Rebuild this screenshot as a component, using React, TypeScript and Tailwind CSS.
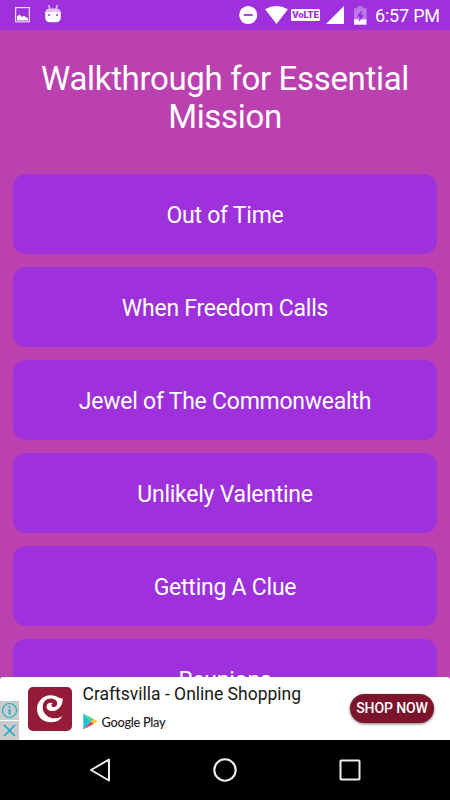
import type { ReactNode } from 'react';

const MISSIONS = [
  'Out of Time',
  'When Freedom Calls',
  'Jewel of The Commonwealth',
  'Unlikely Valentine',
  'Getting A Clue',
  'Reunions',
];

export default function App() {
  return (
    <div className="flex h-[800px] w-[450px] flex-col overflow-hidden bg-[#bb41b1] font-['Roboto',sans-serif]">
      <StatusBar />

      <main className="h-[647px] shrink-0 overflow-hidden px-[13px] text-white">
        <h1 className="mt-[30px] h-[114px] text-center text-[33px] leading-[38px] tracking-[-0.33px]">
          Walkthrough for Essential
          <br />
          Mission
        </h1>
        <div className="flex flex-col gap-[13px]">
          {MISSIONS.map((name) => (
            <MissionButton key={name}>{name}</MissionButton>
          ))}
        </div>
      </main>

      <AdBanner />
      <NavBar />
    </div>
  );
}

function MissionButton({ children }: { children: ReactNode }) {
  return (
    <button className="flex h-[80px] w-full shrink-0 items-center justify-center rounded-[13px] bg-[#9e31dc] pt-[4px] text-[23px] leading-[34px] tracking-[-0.24px]">
      {children}
    </button>
  );
}

function StatusBar() {
  return (
    <header className="flex h-[30px] shrink-0 items-center bg-[#9e31dc] text-white">
      <svg className="ml-[14px]" width="17" height="18" viewBox="0 0 17 18">
        <rect x="1.6" y="1.6" width="13.8" height="14.2" fill="none" stroke="#eed9fa" strokeWidth="1.2" />
        <path d="M3 14.5V10.5l2.5-2 2.5 2.5 2-1.2 4 2.7v2z" fill="#fff" />
      </svg>
      <svg className="ml-[13px]" width="18" height="20" viewBox="0 0 18 20">
        <path d="M4.5 0l1.6 4M13.5 0l-1.6 4" stroke="#e9cef9" strokeWidth="1.3" />
        <path d="M1.6 6.4q.6-2.6 4-2.9h6.8q3.4.3 4 2.9z" fill="#e2c1f6" />
        <path d="M1.2 6.4h15.6V12q0 5-4.3 5.2h-7Q1.2 17 1.2 12z" fill="#fff" />
        <path d="M4 9h2v2H4zM12 9h2v2h-2z" fill="#b965e5" />
      </svg>
      <svg className="ml-[177px]" width="20" height="20" viewBox="0 0 20 20">
        <circle cx="9.2" cy="10" r="9.1" fill="#fff" />
        <path d="M4.8 10h8.8" stroke="#9e31dc" strokeWidth="1.8" />
      </svg>
      <svg className="ml-[6px]" width="24" height="20" viewBox="0 0 24 20">
        <path d="M.1 4.3Q11.5-2.5 22.9 4.3L11.5 19z" fill="#fff" />
      </svg>
      <span className="ml-[2px] flex h-[12px] w-[29px] items-center justify-center rounded-[1.5px] bg-white text-[9.6px] leading-none font-black tracking-[-0.15px] text-[#9e31dc]">
        VoLTE
      </span>
      <svg className="ml-[6px]" width="18" height="18" viewBox="0 0 18 18">
        <path d="M0 18L18 0v18z" fill="#fff" />
      </svg>
      <svg className="ml-[10px]" width="13" height="19" viewBox="0 0 13 19">
        <path d="M0 2.2h3.5V.3h5.5v1.9h3.5V14H0z" fill="#bc78e8" />
        <path d="M0 13.4h12.5v5.3H0z" fill="#fff" />
        <path d="M8 4L2.8 10.5h3L4.7 16l5.1-6.7H7z" fill="#9429d2" />
      </svg>
      <span className="ml-[8px] pt-[2px] text-[18px] leading-none tracking-[-0.2px] whitespace-nowrap">6:57 PM</span>
    </header>
  );
}

function AdBanner() {
  return (
    <section className="flex h-[63px] shrink-0 rounded-t-[3px] bg-white">
      <div className="flex w-[19px] flex-col justify-end gap-[1px]">
        <div className="flex h-[19px] items-center justify-center bg-[#cbcbcb]">
          <svg width="17" height="17" viewBox="0 0 17 17" fill="none" stroke="#1fabc7">
            <circle cx="8.5" cy="8.5" r="7" strokeWidth="1.2" />
            <path d="M8.5 7v5.5M8.5 4v1.7" strokeWidth="1.8" />
          </svg>
        </div>
        <div className="flex h-[19px] items-center justify-center bg-[#cbcbcb]">
          <svg width="13" height="13" viewBox="0 0 13 13" stroke="#1fabc7" strokeWidth="1.7">
            <path d="M1 1l11 11M12 1L1 12" />
          </svg>
        </div>
      </div>

      <div className="mt-[10px] ml-[9px] h-[44px] w-[44px] rounded-[5px] bg-[#951c38]">
        <svg width="44" height="44" viewBox="0 0 44 44">
          <path
            d="M34.8 11.4C31.9 12.3 28.5 8.2 22.5 8.3C14.4 8.5 8.9 15.1 9 22.3C9.1 30.4 15.5 35.6 23.5 35.3C29 35.1 32.8 32.5 34.3 29C30.8 31.6 26.3 32 22 30.4C17 28.4 14.5 24 14.7 19.4C14.9 14.7 18.6 11.4 23.2 11.6C27.6 11.8 30 14.8 29 17.8C28.1 20.2 25.1 20.8 23.8 19.2C22.9 18 23.6 16.5 25 16.4C22.2 14.6 18.7 16.4 18.6 19.4C18.5 22.6 22 24.5 25.7 23.9C31.3 22.9 34.8 17.8 34.8 11.4Z"
            fill="#fff"
          />
        </svg>
      </div>

      <div className="ml-[10.5px] flex w-[267.5px] flex-col pt-[7px]">
        <p className="text-[17.5px] leading-[20px] whitespace-nowrap text-[#181818]">Craftsvilla - Online Shopping</p>
        <div className="mt-[8px] flex h-[18px] items-center">
          <PlayLogo />
          <span className="ml-[4px] pt-[1px] font-['Lato',sans-serif] text-[12.8px] leading-[18px] font-medium tracking-[-0.3px] whitespace-nowrap text-[#222]">
            Google Play
          </span>
        </div>
      </div>

      <button className="mt-[17px] flex h-[29px] w-[84px] shrink-0 items-center justify-center rounded-full bg-[#7c142c] pb-[1px] text-[14px] font-medium tracking-[-0.1px] whitespace-nowrap text-white shadow-[0_1px_3px_rgba(0,0,0,0.55)]">
        SHOP NOW
      </button>
    </section>
  );
}

function PlayLogo() {
  return (
    <svg width="15" height="17" viewBox="0 0 15 17">
      <path d="M.3.5L8 8.5.3 16.5z" fill="#20bfdc" />
      <path d="M.3.5l10.3 5.4L8 8.5z" fill="#4bd98b" />
      <path d="M10.6 5.9l4 2.6-4 2.6L8 8.5z" fill="#fdc52c" />
      <path d="M.3 16.5L8 8.5l2.6 2.6z" fill="#e93e51" />
    </svg>
  );
}

function NavBar() {
  return (
    <nav className="flex h-[60px] shrink-0 items-center bg-black">
      <svg className="ml-[88px]" width="24" height="26" viewBox="0 0 24 26">
        <path d="M3 13L21 2.5v21z" fill="none" stroke="#eee" strokeWidth="2" strokeLinejoin="round" />
      </svg>
      <svg className="ml-[100px]" width="26" height="26" viewBox="0 0 26 26">
        <circle cx="13" cy="13" r="10.7" fill="none" stroke="#eee" strokeWidth="2.1" />
      </svg>
      <svg className="ml-[100px]" width="24" height="24" viewBox="0 0 24 24">
        <rect x="2.5" y="2.5" width="19" height="19" rx=".7" fill="none" stroke="#eee" strokeWidth="2" />
      </svg>
    </nav>
  );
}
